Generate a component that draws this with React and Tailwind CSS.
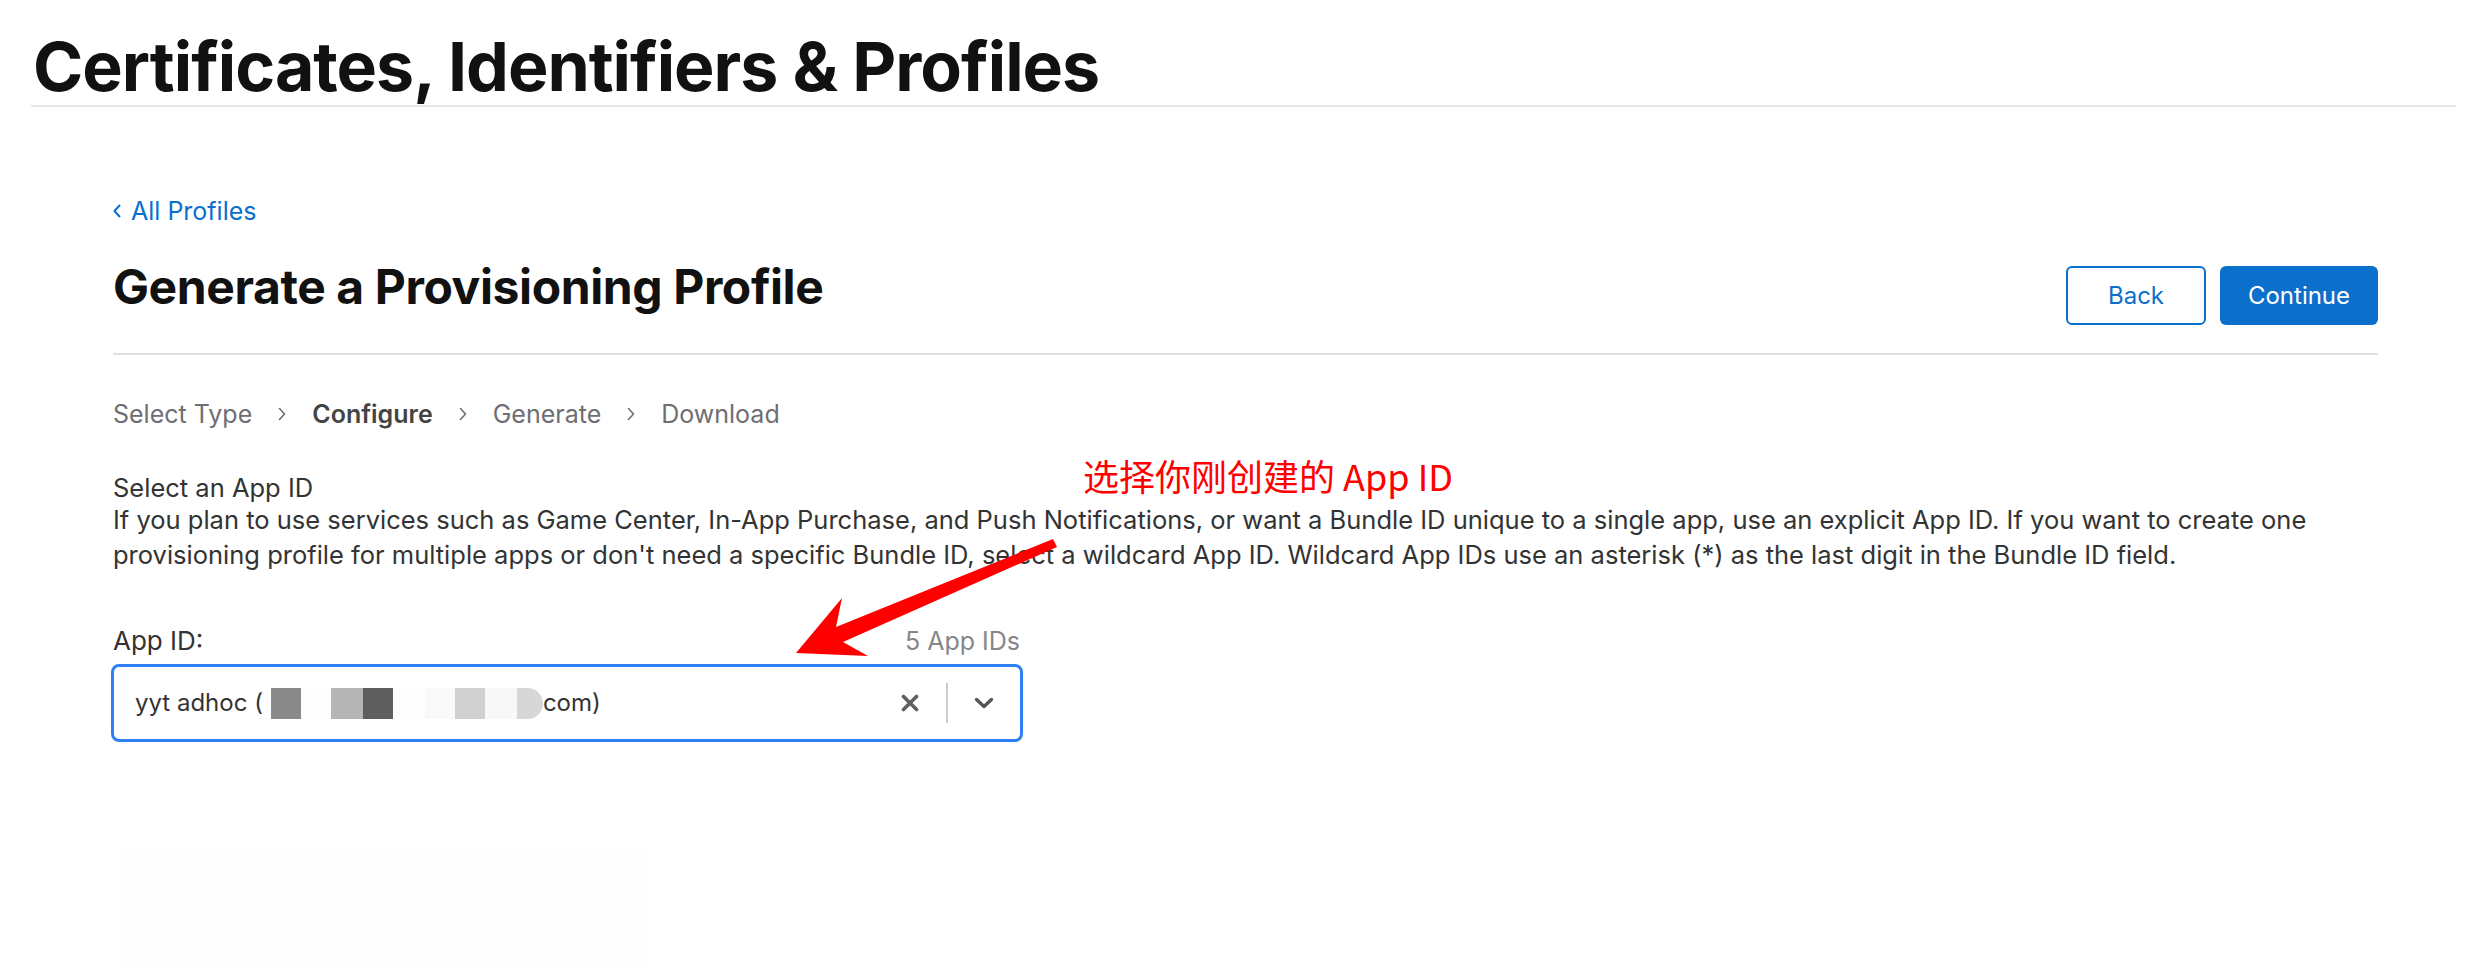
import React from 'react';

function StepChevron() {
  return (
    <svg width="8" height="14" viewBox="0 0 8 14" className="shrink-0">
      <polyline points="1.5,1.5 6.5,7 1.5,12.5" fill="none" stroke="#6e6e73" strokeWidth="1.6" strokeLinecap="round" strokeLinejoin="round" />
    </svg>
  );
}

export default function App() {
  const steps = ['Select Type', 'Configure', 'Generate', 'Download'];

  return (
    <div className="relative min-h-[970px] w-[2468px] bg-white text-[#333] font-[family-name:Inter,'Noto_Sans',sans-serif]">
      {/* Page header */}
      <header className="pl-[31px] pr-[12px]">
        <h1 className="pl-[2px] pt-[32px] pb-[5px] text-[68px] leading-[68px] font-bold tracking-[-1px] text-[#111] border-b-2 border-[#e6e6e6]">
          Certificates, Identifiers &amp; Profiles
        </h1>
      </header>

      <main className="ml-[113px] w-[2265px] pt-[89px]">
        <a className="flex items-center gap-[10px] text-[25px] leading-[30px] text-[#0b6fcc]">
          <svg width="8" height="14" viewBox="0 0 8 14">
            <polyline points="6.5,1.5 1.5,7 6.5,12.5" fill="none" stroke="#0b6fcc" strokeWidth="2" strokeLinecap="round" strokeLinejoin="round" />
          </svg>
          All Profiles
        </a>

        {/* Title row */}
        <div className="mt-[32px] flex items-start justify-between pb-[28px] border-b-2 border-[#e0e0e0]">
          <h2 className="text-[48px] leading-[58px] font-bold tracking-[-0.4px] text-[#111]">Generate a Provisioning Profile</h2>
          <div className="mt-[8px] flex gap-[14px]">
            <button className="w-[140px] h-[59px] rounded-[6px] border-2 border-[#0b6fcc] text-[24px] text-[#0b6fcc]">Back</button>
            <button className="w-[158px] h-[59px] rounded-[6px] bg-[#0b6fcc] text-[24px] text-white">Continue</button>
          </div>
        </div>

        {/* Steps */}
        <div className="mt-[44px] flex items-center gap-[26px] text-[25px] leading-[30px] text-[#6e6e73]">
          {steps.map((s, i) => (
            <React.Fragment key={s}>
              {i > 0 && <StepChevron />}
              <span className={s === 'Configure' ? 'font-semibold text-[#444]' : ''}>{s}</span>
            </React.Fragment>
          ))}
        </div>

        {/* Description */}
        <div className="mt-[44px] text-[25.5px] text-[#333]">
          <p className="leading-[29px]">Select an App ID</p>
          <p className="leading-[35px]">
            If you plan to use services such as Game Center, In-App Purchase, and Push Notifications, or want a Bundle ID unique to a single app, use an explicit App ID. If you want to create one provisioning profile for multiple apps or don't need a specific Bundle ID, select a wildcard App ID. Wildcard App IDs use an asterisk (*) as the last digit in the Bundle ID field.
          </p>
        </div>

        {/* App ID field */}
        <div className="mt-[53px] w-[912px] -ml-[2px]">
          <div className="flex items-baseline justify-between pl-[2px] pr-[3px] leading-[31px]">
            <span className="text-[26px] text-[#333]">App ID:</span>
            <span className="text-[25px] text-[#86868b]">5 App IDs</span>
          </div>
          <div className="mt-[7px] h-[78px] flex items-center rounded-[8px] border-[3px] border-[#2f80f6] pl-[21px] pr-[26px]">
            <div className="flex flex-1 items-center text-[24px] leading-[30px] text-[#333]">
              <span>yyt adhoc (</span>
              <span className="ml-[8px] flex h-[31px]">
                <span className="w-[30px] bg-[#8a8a8a]" />
                <span className="w-[30px] bg-[#fdfdfd]" />
                <span className="w-[32px] bg-[#b5b5b5]" />
                <span className="w-[30px] bg-[#5e5e5e]" />
                <span className="w-[32px] bg-[#fdfdfd]" />
                <span className="w-[30px] bg-[#f9f9f9]" />
                <span className="w-[30px] bg-[#d0d0d0]" />
                <span className="w-[32px] bg-[#f8f8f8]" />
                <span className="w-[26px] bg-[#d7d7d7] rounded-r-full" />
              </span>
              <span>com)</span>
            </div>
            <svg width="18" height="18" viewBox="0 0 18 18">
              <path d="M2.5 2.5 L15.5 15.5 M15.5 2.5 L2.5 15.5" stroke="#5f5f5f" strokeWidth="3.6" strokeLinecap="round" />
            </svg>
            <span className="ml-[27px] h-[40px] w-[2px] bg-[#cccccc]" />
            <svg width="20" height="12" viewBox="0 0 20 12" className="ml-[26px]">
              <polyline points="2.5,2.5 10,9.5 17.5,2.5" fill="none" stroke="#555" strokeWidth="3.4" strokeLinecap="round" strokeLinejoin="round" />
            </svg>
          </div>
        </div>
      </main>

      {/* faint blurred area */}
      <div className="absolute left-[120px] top-[850px] h-[115px] w-[530px] bg-[#fefefe]" />

      {/* Annotation */}
      <div className="absolute left-[1083px] top-[455px] text-[36px] leading-[40px] text-[#ff0000] font-[family-name:'Noto_Sans_CJK_SC',sans-serif]">
        选择你刚创建的 App ID
      </div>
      <svg className="pointer-events-none absolute left-0 top-0" width="2468" height="970" viewBox="0 0 2468 970">
        <polygon
          points="796,653 868,656 843,642 1057,547 1053,539 836,627 842,598"
          fill="#ff0000"
        />
      </svg>
    </div>
  );
}
